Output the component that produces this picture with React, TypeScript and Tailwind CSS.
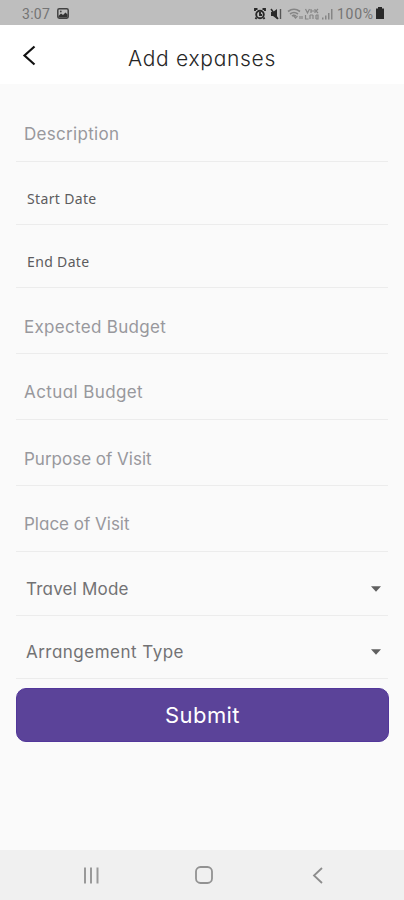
import React from "react";

type Field = {
  label: string;
  row: string;
  text: string;
  select?: boolean;
};

const placeholder = "pl-[8px] text-[17px] text-[#98989d]";
const picker = "pl-[11px] text-[14px] text-[#5c5c5e]";
const choice = "pl-[10px] text-[17px] text-[#727274]";

const fields: Field[] = [
  { label: "Description", row: "h-[66px] pt-[26px]", text: `${placeholder} tracking-[0.3px]` },
  { label: "Start Date", row: "h-[63px] pt-[25px]", text: `${picker} font-['Noto_Sans'] tracking-[0.35px]` },
  { label: "End Date", row: "h-[63px] pt-[25px]", text: `${picker} font-['Noto_Sans'] tracking-[0.35px]` },
  { label: "Expected Budget", row: "h-[66px] pt-[27px]", text: `${placeholder} tracking-[0.3px]` },
  { label: "Actual Budget", row: "h-[66px] pt-[26px]", text: `${placeholder} tracking-[0.4px]` },
  { label: "Purpose of Visit", row: "h-[66px] pt-[27px]", text: `${placeholder} tracking-[0px]` },
  { label: "Place of Visit", row: "h-[66px] pt-[26px]", text: `${placeholder} tracking-[0px]` },
  { label: "Travel Mode", row: "h-[64px] pt-[25px]", text: `${choice} tracking-[0.2px]`, select: true },
  { label: "Arrangement Type", row: "h-[63px] pt-[24px]", text: `${choice} tracking-[0.48px]`, select: true },
];

function StatusBar() {
  return (
    <header className="flex h-[25px] shrink-0 items-center bg-[#bebebe] pl-[22px] pr-[19px] pt-[2px] text-[#747474]">
      <span className="w-[29px] whitespace-nowrap font-[Roboto] text-[14px] leading-[20px] tracking-[0.3px]">3:07</span>
      <svg className="ml-[6px]" width="12" height="11" viewBox="0 0 12 11">
        <rect x="0.8" y="0.8" width="10.4" height="9.4" rx="1.4" fill="none" stroke="#424242" strokeWidth="1.5" />
        <path d="M1.5 8 4 5.5 6 7 8.5 4.5 10.5 6.5V9.5H1.5Z" fill="#333" />
        <circle cx="3.8" cy="3.5" r="0.9" fill="#444" />
      </svg>
      <svg className="ml-auto" width="80" height="14" viewBox="0 0 80 14" fill="none">
        <g stroke="#292929" strokeWidth="1.9">
          <circle cx="6" cy="7.5" r="3.8" />
          <path d="M1 4V2h2.5M11 4V2H8.5M2.5 10.5 1.5 12M9.5 10.5l1 1.5M6 5v3h2" />
        </g>
        <path d="M17 5h2l4-3v10l-4-3h-2Z" fill="#2b2b2b" />
        <path d="m17 2 7 10" stroke="#2b2b2b" strokeWidth="1.5" />
        <path d="M26.5 2v10" stroke="#555" strokeWidth="1.4" />
        <g stroke="#858585" strokeWidth="1.6">
          <path d="M34 4.5q6-4.5 12 0M36 7q4-3 8 0M38 9q2-1.5 4 0" />
          <path d="m39 8 2.5 3 2-2M46 9v3M48 12V9" strokeWidth="1.2" />
        </g>
        <g stroke="#858585" strokeWidth="1.2">
          <path d="m51.5 2 2 4 2-4M57 2v4m0-2h3M61 2v4M51.5 8v4h3M56 8v4M56 8h3M59 8v4M62 8v4M62 8h2v4h-2M64 2l-2 2 2 2" />
        </g>
        <path d="M68 10.5h1.5v2H68zM71 8.5h1.5v4H71zM74 6h1.5v6.5H74zM77 2h1.5v10.5H77z" fill="#858585" />
      </svg>
      <span className="ml-[3px] w-[38px] whitespace-nowrap font-[Roboto] text-[14px] leading-[20px] tracking-[0.7px]">100%</span>
      <svg className="-mt-px" width="10" height="12" viewBox="0 0 10 12">
        <path d="M3 0h4v1.5h2V12H1V1.5h2Z" fill="#292929" />
      </svg>
    </header>
  );
}

export default function App() {
  return (
    <div className="flex h-[900px] w-[404px] flex-col overflow-hidden bg-[#fafafa] font-[Inter,'Noto_Sans',sans-serif] [font-feature-settings:'cv11']">
      <StatusBar />
      <div className="grid h-[59px] shrink-0 grid-cols-[64px_1fr_64px] bg-white">
        <button aria-label="Back" className="flex items-start pl-[22px] pt-[20px]">
          <svg width="14" height="21" viewBox="0 0 14 21" fill="none" stroke="#111" strokeWidth="2.2">
            <path d="M12.5 1.5 2.5 10.5 12.5 19.5" />
          </svg>
        </button>
        <h1 className="whitespace-nowrap pt-[19px] text-center text-[21px] font-[350] leading-[30px] tracking-[0.7px] text-[#262626]">Add expanses</h1>
      </div>
      <main className="flex flex-1 flex-col px-[16px] pt-[12px]">
        {fields.map((field) => (
          <div key={field.label} className={`${field.row} flex items-start justify-between border-b border-[#ececec] leading-[24px]`}>
            <span className={`${field.text} whitespace-nowrap`}>{field.label}</span>
            {field.select && (
              <svg className="mr-[7px] mt-[9px]" width="10" height="6" viewBox="0 0 11 6">
                <path d="M0 0h11L5.5 6Z" fill="#606060" />
              </svg>
            )}
          </div>
        ))}
        <button className="-mr-px mt-[9px] h-[54px] rounded-[10px] border border-[#52379a] bg-[#5b4399] text-[22px] leading-[30px] tracking-[0.4px] text-white">
          Submit
        </button>
      </main>
      <nav className="flex h-[50px] shrink-0 items-center bg-[#f0f0f0] pl-[83px]">
        <svg width="17" height="17" viewBox="0 0 17 17" stroke="#999" strokeWidth="2">
          <path d="M2 0.5v16M8 0.5v16M14.5 0.5v16" />
        </svg>
        <svg className="ml-[95px]" width="18" height="18" viewBox="0 0 18 18" fill="none" stroke="#929292" strokeWidth="1.8">
          <rect x="1" y="1" width="16" height="16" rx="4.5" />
        </svg>
        <svg className="ml-[99px]" width="12" height="17" viewBox="0 0 12 17" fill="none" stroke="#8c8c8c" strokeWidth="1.8">
          <path d="m10 1-8 7.5 8 7.5" />
        </svg>
      </nav>
    </div>
  );
}
